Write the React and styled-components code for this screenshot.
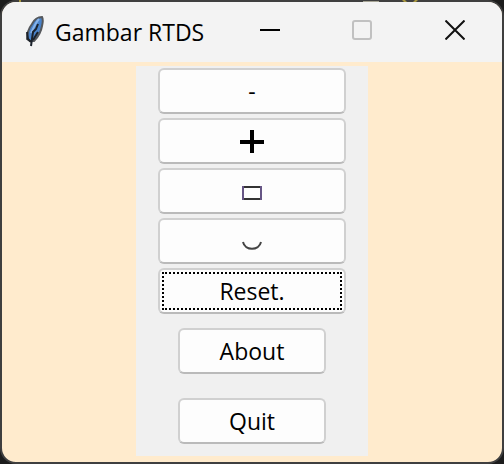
import React from 'react';
import styled, { createGlobalStyle } from 'styled-components';

const GlobalStyle = createGlobalStyle`
  * { box-sizing: border-box; }
  body {
    margin: 0;
    background: #1c1c1c;
    color: #000;
    font-family: "Open Sans", "Noto Sans", sans-serif;
  }
`;

const Desktop = styled.div`
  position: relative;
  display: flex;
  min-height: 100vh;
`;

const DesktopSpecks = styled.svg`
  position: absolute;
  top: 0;
  left: 0;
  width: 504px;
  height: 2px;
`;

const Window = styled.main`
  flex: 1;
  display: flex;
  flex-direction: column;
  border: 2px solid #3f3f3f;
  border-radius: 16px;
  background: #ffebcd;
  overflow: hidden;
`;

const TitleBar = styled.header`
  display: flex;
  align-items: stretch;
  height: 60px;
  padding-left: 16px;
  background: #f3f3f3;
`;

const TitleIcon = styled.svg`
  align-self: center;
  width: 32px;
  height: 36px;
  flex: none;
`;

const Title = styled.h1`
  flex: 1;
  align-self: center;
  margin: 0;
  padding-left: 5px;
  font-size: 23px;
  line-height: 32px;
  font-weight: 400;
  white-space: nowrap;
`;

const WindowControl = styled.button`
  display: flex;
  align-items: center;
  justify-content: center;
  width: ${({ $wide }) => ($wide ? 94 : 92)}px;
  padding: 0 0 4px;
  border: 0;
  background: transparent;
  color: #111;

  &:disabled { color: #c1c1c1; }
`;

const Glyph = styled.svg`
  display: block;
  width: ${({ $size }) => $size}px;
  height: ${({ $size }) => $size}px;
  fill: none;
  stroke: currentColor;
  stroke-width: 2;
`;

const Content = styled.div`
  flex: 1;
  display: flex;
  justify-content: center;
  align-items: flex-start;
  padding: 4px 0 6px;
`;

const Panel = styled.div`
  display: flex;
  flex-direction: column;
  align-items: center;
  padding: 2px 22px 12px;
  background: #f0f0f0;
`;

const ToolGroup = styled.div`
  display: flex;
  flex-direction: column;
  gap: 4px;
`;

const ActionGroup = styled.div`
  display: flex;
  flex-direction: column;
  gap: 24px;
  margin-top: 14px;
`;

const PushButton = styled.button`
  display: flex;
  align-items: center;
  justify-content: center;
  width: ${({ $small }) => ($small ? 148 : 188)}px;
  height: 46px;
  padding: 2px;
  border: 2px solid #d0d0d0;
  border-bottom-color: #bababa;
  border-radius: 6px;
  background: #fdfdfd;
  color: #000;
  font: 400 23px/32px "Open Sans", "Noto Sans", sans-serif;
`;

const FocusFrame = styled.span`
  flex: 1;
  display: flex;
  align-items: center;
  justify-content: center;
  height: 38px;
  border: 2px dotted #000;
`;

function Feather() {
  return (
    <TitleIcon viewBox="0 0 32 36" aria-hidden="true">
      <path d="M24 3c-5 0-8 3-10 7-3 4-5 9-5 15l3 2h4c4-4 7-9 8-15 1-4 1-7 0-9z" fill="#4a83ca" stroke="#55585c" strokeWidth="2" />
      <path d="M21 5c-3 3-5 8-8 14" stroke="#86b3ea" strokeWidth="2" fill="none" />
      <path d="M20 10l-2 5-3 3-1 7-1 7" stroke="#1b222c" strokeWidth="2" fill="none" />
      <path d="M9 18l1 7 3 3M20 18l-5 8" stroke="#1d2229" strokeWidth="2" fill="none" />
    </TitleIcon>
  );
}

export default function App() {
  return (
    <>
      <GlobalStyle />
      <Desktop>
        <Window>
          <TitleBar>
            <Feather />
            <Title>Gambar RTDS</Title>
            <WindowControl type="button" aria-label="Minimize">
              <Glyph $size={20} viewBox="0 0 20 20"><path d="M0 10h20" stroke="#000" /></Glyph>
            </WindowControl>
            <WindowControl type="button" aria-label="Maximize" disabled>
              <Glyph $size={20} viewBox="0 0 20 20"><rect x="1" y="1" width="18" height="18" rx="2" /></Glyph>
            </WindowControl>
            <WindowControl type="button" aria-label="Close" $wide>
              <Glyph $size={20} viewBox="0 0 20 20"><path d="M0.5 0.5l19 19M19.5 0.5l-19 19" /></Glyph>
            </WindowControl>
          </TitleBar>
          <Content>
            <Panel>
              <ToolGroup>
                <PushButton type="button">-</PushButton>
                <PushButton type="button" aria-label="Plus">
                  <Glyph $size={24} viewBox="0 0 24 24">
                    <path d="M0 13h24M12 1v24" strokeWidth="4" />
                  </Glyph>
                </PushButton>
                <PushButton type="button" aria-label="Rectangle">
                  <Glyph $size={24} viewBox="0 0 24 24">
                    <path d="M2 8h20M2 20h20" stroke="#333" />
                    <path d="M3 7v14M21 7v14" stroke="#665585" />
                  </Glyph>
                </PushButton>
                <PushButton type="button" aria-label="Arc">
                  <Glyph $size={24} viewBox="0 0 24 24">
                    <path d="M3 13c2 9 16 9 18 0" stroke="#444" />
                  </Glyph>
                </PushButton>
                <PushButton type="button"><FocusFrame>Reset.</FocusFrame></PushButton>
              </ToolGroup>
              <ActionGroup>
                <PushButton type="button" $small>About</PushButton>
                <PushButton type="button" $small>Quit</PushButton>
              </ActionGroup>
            </Panel>
          </Content>
        </Window>
        <DesktopSpecks viewBox="0 0 504 2" aria-hidden="true">
          <path d="M363 1h16v1h-16z" fill="#a5a394" />
          <path d="M402 0h3l2 2h-3zM415 0h3l-2 2h-3zM19 0h2v2h-2z" fill="#a8973f" />
        </DesktopSpecks>
      </Desktop>
    </>
  );
}
